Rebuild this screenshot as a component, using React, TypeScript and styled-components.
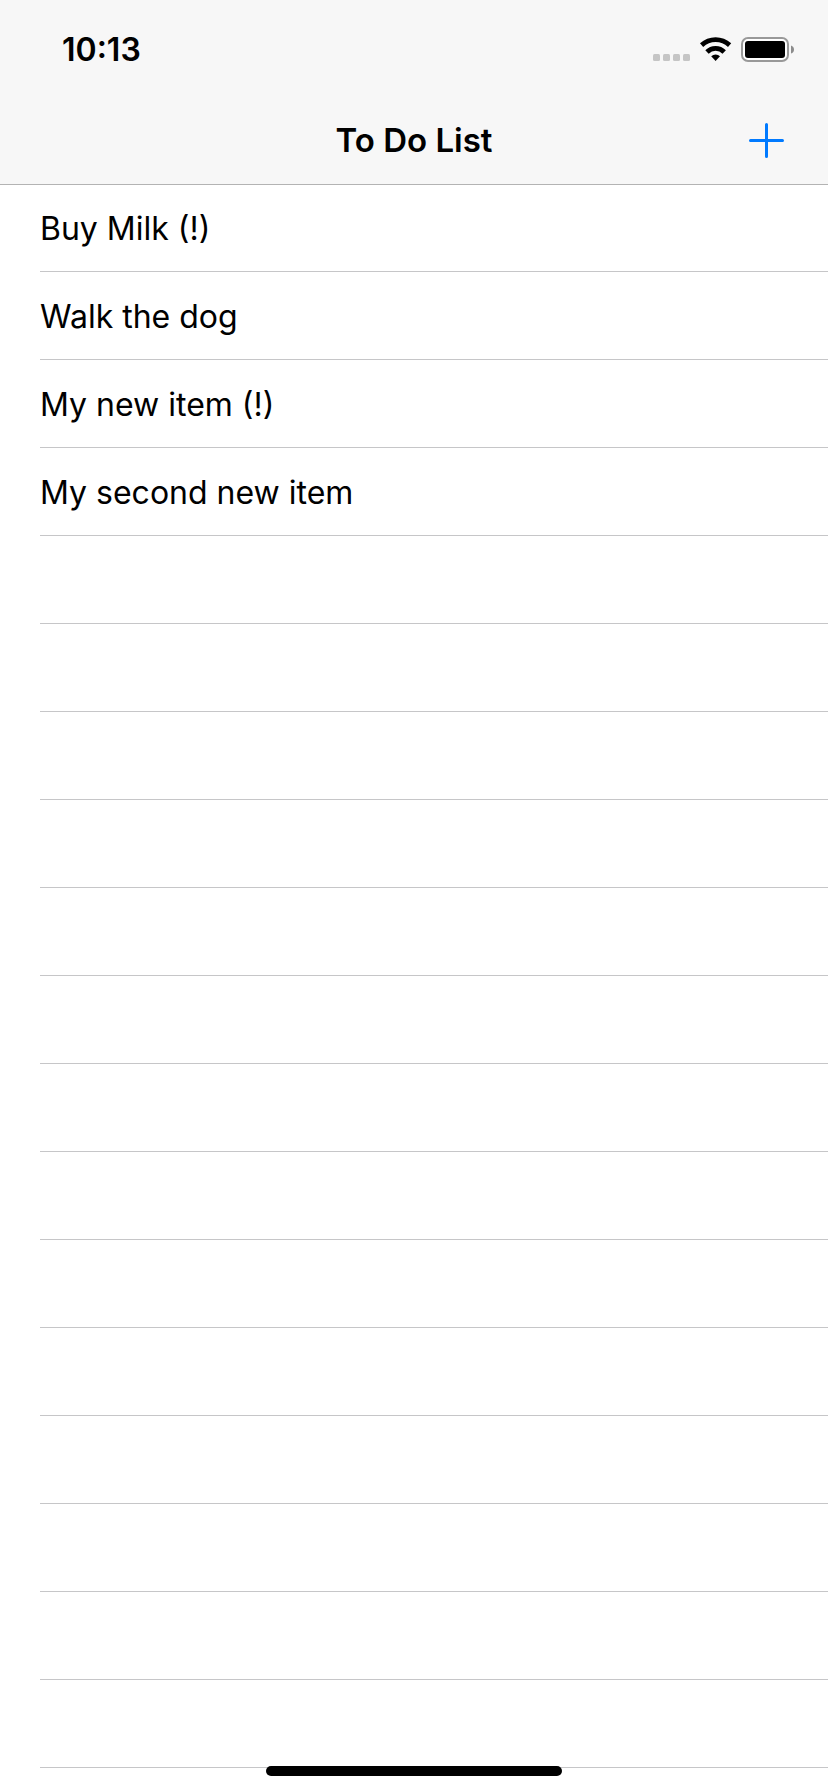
import React from "react";
import styled, { createGlobalStyle } from "styled-components";

const GlobalStyle = createGlobalStyle`
  * { box-sizing: border-box; }
  body {
    margin: 0;
    background: #ffffff;
    color: #000000;
    font-family: Inter, "Liberation Sans", sans-serif;
  }
`;

const Screen = styled.div`
  min-height: 100vh;
  padding-bottom: 24px;
`;

const Header = styled.header`
  background: #f7f7f7;
  box-shadow: 0 1px 0 #b3b3b3;
`;

const StatusBar = styled.div`
  display: flex;
  align-items: center;
  justify-content: space-between;
  height: 96px;
  padding: 4px 34px 0 62px;
`;

const Clock = styled.time`
  font-size: 32px;
  line-height: 40px;
  font-weight: 600;
`;

const NavBar = styled.nav`
  display: grid;
  grid-template-columns: 1fr auto 1fr;
  align-items: center;
  height: 88px;
  padding: 0 40px;
`;

const Title = styled.h1`
  grid-column: 2;
  margin: 0;
  font-size: 33px;
  line-height: 40px;
  font-weight: 600;
`;

const AddButton = styled.button`
  justify-self: end;
  display: flex;
  padding: 0;
  border: 0;
  background: none;
  color: #007aff;
  cursor: pointer;
`;

const List = styled.ul`
  margin: 0;
  padding: 0 0 0 40px;
  list-style: none;
`;

const Row = styled.li`
  display: flex;
  align-items: center;
  height: 88px;
  padding-top: 2px;
  border-bottom: 1px solid #c6c6c8;
  font-size: 32px;
  line-height: 40px;
`;

const HomeIndicator = styled.div`
  position: fixed;
  bottom: 16px;
  left: 50%;
  width: 296px;
  height: 10px;
  margin-left: -148px;
  border-radius: 5px;
  background: #000000;
`;

const StatusIcons = () => (
  <svg width="142" height="28" viewBox="0 0 142 28" role="img" aria-label="No signal, Wi-Fi, battery full">
    <g fill="#c5c5c5">
      <rect x="1" y="18" width="7" height="7" rx="1.5" />
      <rect x="11" y="18" width="7" height="7" rx="1.5" />
      <rect x="21" y="18" width="7" height="7" rx="1.5" />
      <rect x="31" y="18" width="7" height="7" rx="1.5" />
    </g>
    <path d="M49.6 9.1A20.9 20.9 0 0 1 77.6 9.1" fill="none" stroke="#000" strokeWidth="4.8" />
    <path d="M55 16A12.2 12.2 0 0 1 72.2 16" fill="none" stroke="#000" strokeWidth="4.8" />
    <path d="M63.6 25 L59.2 20.3A6.4 6.4 0 0 1 68 20.3Z" fill="#000" />
    <rect x="90" y="2" width="46" height="23" rx="6" fill="#fff" stroke="#999" strokeWidth="2" />
    <rect x="93" y="5" width="40" height="17" rx="3" fill="#000" />
    <path d="M139 9.5Q142 10.5 142 13.5T139 17.5Z" fill="#8c8c8c" />
  </svg>
);

const PlusIcon = () => (
  <svg width="41" height="41" viewBox="0 0 41 41" aria-hidden="true">
    <path d="M19.5 4.5V36.5M3.5 20.5H35.5" stroke="currentColor" strokeWidth="3" strokeLinecap="round" />
  </svg>
);

const items = ["Buy Milk (!)", "Walk the dog", "My new item (!)", "My second new item"];
const ROW_COUNT = 18;

export default function App() {
  return (
    <Screen>
      <GlobalStyle />
      <Header>
        <StatusBar>
          <Clock>10:13</Clock>
          <StatusIcons />
        </StatusBar>
        <NavBar>
          <Title>To Do List</Title>
          <AddButton type="button" aria-label="Add item">
            <PlusIcon />
          </AddButton>
        </NavBar>
      </Header>
      <main>
        <List>
          {Array.from({ length: ROW_COUNT }, (_, i) => (
            <Row key={i} aria-hidden={i >= items.length}>
              {items[i]}
            </Row>
          ))}
        </List>
      </main>
      <HomeIndicator />
    </Screen>
  );
}
